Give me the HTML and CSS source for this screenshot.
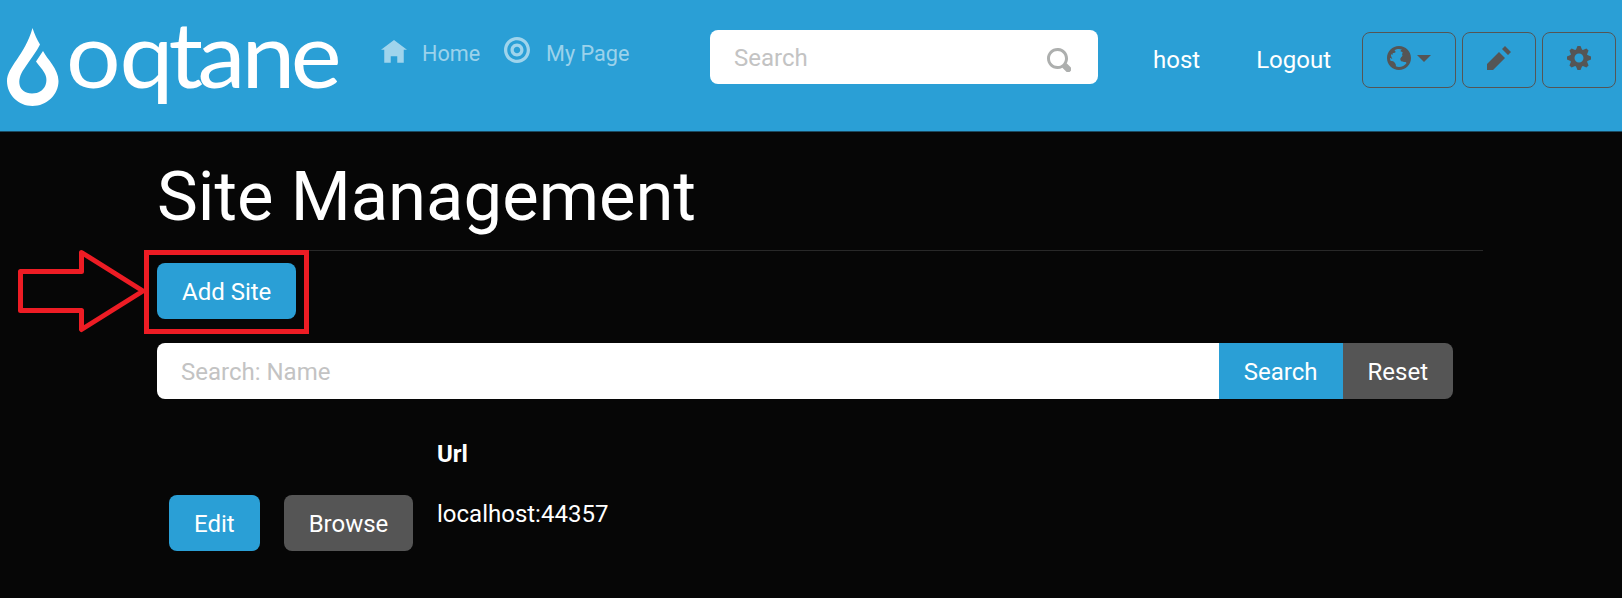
FILE: index.html
```html
<!DOCTYPE html>
<html lang="en">
<head>
<meta charset="utf-8">
<title>Site Management</title>
<link rel="stylesheet" href="styles.css">
</head>
<body>
<header class="topbar">
  <a class="brand" href="#">
    <svg class="logo" width="350" height="131" viewBox="0 0 350 131">
      <path class="ink" d="M32.500 28C34.500 34 37 39.500 40 44.500C37 51 29 61 24 69C16 80 18 93 32 93.500C46 93.500 49 80 44.500 73C42 68.500 38.500 65 36 61.500L43 51C47 59 58.500 69 58.500 81C58.500 95 46.500 106 32.500 106C18.500 106 7 95 7 81C7 67 25 55 32.500 28Z"/>
      <text class="wordmark" transform="scale(1.060 1)" y="88" x="62.2 112.700 159 186.300 227.800 274.200">oqtane</text>
    </svg>
  </a>
  <nav class="menu">
    <a class="menu-item" href="#"><svg class="icon home-icon" viewBox="0 0 8 8"><path d="M4 0l-4 3h1v4h2v-2h2v2h2v-4.030l1 .030-4-3z"/></svg>Home</a>
    <a class="menu-item" href="#"><svg class="icon target-icon" viewBox="0 0 8 8"><path d="M4 0c-2.200 0-4 1.800-4 4s1.800 4 4 4 4-1.800 4-4-1.800-4-4-4zm0 1c1.660 0 3 1.340 3 3s-1.340 3-3 3-3-1.340-3-3 1.340-3 3-3zm0 1c-1.110 0-2 .9-2 2s.9 2 2 2 2-.9 2-2-.89-2-2-2zm0 1c.56 0 1 .44 1 1s-.44 1-1 1-1-.44-1-1 .44-1 1-1z"/></svg>My Page</a>
  </nav>
  <div class="search"><span class="placeholder">Search</span><svg class="icon" viewBox="0 0 8 8"><path d="M3.500 0c-1.930 0-3.500 1.570-3.500 3.500s1.570 3.500 3.500 3.500c.59 0 1.170-.14 1.660-.41a1 1 0 0 0 .13.13l1 1a1.020 1.020 0 1 0 1.440-1.440l-1-1a1 1 0 0 0-.16-.13c.27-.49.44-1.060.44-1.660 0-1.930-1.550-3.500-3.500-3.500zm0 1c1.390 0 2.500 1.110 2.500 2.500 0 .66-.24 1.270-.66 1.720-.01.01-.02.02-.03.03a1 1 0 0 0-.13.13c-.44.4-1.040.63-1.690.63-1.390 0-2.500-1.110-2.500-2.500s1.110-2.500 2.500-2.500z"/></svg></div>
  <div class="account"><a href="#">host</a><a href="#">Logout</a></div>
  <div class="tools">
    <button class="tool globe"><svg class="icon" viewBox="0 0 8 8"><path d="M4 0c-2.200 0-4 1.800-4 4s1.800 4 4 4 4-1.800 4-4-1.800-4-4-4zm0 1c.33 0 .64.09.94.19-.21.2-.45.38-.41.56.04.18.69.13.69.5 0 .27-.42.35-.13.66.35.35-.64.98-.66 1.440-.03.83.84.97 1.530.97.42 0 .53.2.5.44-.54.77-1.460 1.250-2.470 1.250-.38 0-.73-.09-1.060-.22.22-.44-.28-1.310-.75-1.590-.23-.23-.72-.14-1-.25-.09-.27-.18-.54-.19-.84.03-.05.08-.09.16-.09.19 0 .45.38.59.34.18-.04-.74-1.310-.31-1.560.2-.12.6.39.47-.16-.12-.51.36-.28.66-.41.26-.11.45-.41.13-.59-.06-.03-.13-.1-.22-.19.45-.27.97-.44 1.530-.44z"/></svg><span class="caret"></span></button>
    <button class="tool"><svg class="icon" viewBox="0 0 8 8"><path d="M6 0l-1 1 2 2 1-1-2-2zm-2 2l-4 4v2h2l4-4-2-2z"/></svg></button>
    <button class="tool"><svg class="icon" viewBox="0 0 8 8"><path d="M3.500 0l-.5 1.190c-.1.030-.19.080-.28.130l-1.190-.5-.72.720.5 1.190c-.05.1-.09.180-.13.280l-1.190.5v1l1.190.5c.04.1.08.180.130.280l-.5 1.190.720.720 1.190-.5c.09.040.180.090.280.130l.5 1.190h1l.5-1.190c.090-.040.190-.080.280-.130l1.190.5.720-.720-.5-1.190c.040-.090.090-.190.130-.280l1.190-.5v-1l-1.190-.5c-.030-.090-.080-.190-.130-.280l.5-1.190-.720-.720-1.190.5c-.090-.040-.190-.090-.280-.130l-.5-1.190h-1zm.5 2.500c.83 0 1.500.67 1.500 1.500s-.67 1.500-1.500 1.500-1.500-.67-1.500-1.500.67-1.500 1.500-1.500z"/></svg></button>
  </div>
</header>
<main class="content">
  <h1 class="title">Site Management</h1>
  <div class="actions">
    <button class="btn primary">Add Site</button>
    <svg class="callout" width="300" height="90" viewBox="14 245 300 90"><rect x="146.500" y="252.500" width="160" height="79"/><path class="arrow" d="M20.500 271.500H81.500V252.500L143 291L81.500 329.500V310.500H20.500Z"/></svg>
  </div>
  <div class="filter">
    <div class="field">Search: Name</div>
    <button class="btn primary">Search</button>
    <button class="btn secondary">Reset</button>
  </div>
  <div class="grid">
    <span class="head">Url</span>
    <button class="btn primary edit">Edit</button>
    <button class="btn secondary browse">Browse</button>
    <span class="url">localhost:44357</span>
  </div>
</main>
</body>
</html>
```
FILE: styles.css
```css
* { box-sizing: border-box; }
body { margin: 0; height: 598px; overflow: hidden; background: #060606; color: #fff; font: 24px/36px Roboto, sans-serif; }
a { color: inherit; text-decoration: none; }
button { font: inherit; color: #fff; margin: 0; }
.icon { width: 24px; height: 24px; fill: currentColor; flex: none; display: block; }

.topbar { height: 132px; background: #2a9fd6; border-bottom: 1px solid #1b4a61; display: flex; align-items: flex-start; }
.brand { width: 381px; flex: none; }
.logo { display: block; overflow: visible; }
.ink { fill: #fff; }
.wordmark { fill: #fff; font: 91px Lato, sans-serif; }
.menu { width: 329px; flex: none; display: flex; gap: 24px; padding-top: 36px; color: rgba(255,255,255,.55); }
.menu-item { display: flex; font-size: 21.6px; line-height: 36px; }
.menu-item .icon { width: 26px; height: 26px; margin-right: 15px; }
.menu-item .target-icon { margin-top: 1px; margin-right: 16px; }
.home-icon { margin-top: 4px; }
.search { width: 388px; height: 54px; margin-top: 30px; padding: 0 27px 0 24px; border-radius: 8px; background: #fff; color: #c3c3c3; display: flex; justify-content: space-between; align-items: center; flex: none; }
.placeholder { padding-top: 2px; }
.search .icon { color: #adafae; margin-top: 6px; }
.account { width: 264px; padding: 42px 0 0 55px; display: flex; gap: 56px; flex: none; }
.tools { display: flex; gap: 6px; padding-top: 32px; }
.tool { width: 74px; height: 56px; padding: 13px 0 0 24px; border: 1px solid #555; border-radius: 8px; background: none; color: #555; display: flex; align-items: flex-start; }
.globe { width: 94px; }
.caret { border: 7px solid transparent; border-top-color: #555; border-bottom: 0; margin: 9px 0 0 6px; }

.content { width: 1326px; margin-left: 157px; padding-top: 22px; }
.title { margin: 0; height: 97px; border-bottom: 1px solid #282828; font-size: 68.8px; font-weight: 400; line-height: 86px; }
.actions { position: relative; padding-top: 12px; height: 92px; }
.callout { position: absolute; left: -143px; top: -6px; fill: none; stroke: #ed1c24; stroke-width: 5; }
.arrow { stroke-linejoin: round; }
.btn { height: 56px; padding: 1px 25px 0; border: 0; border-radius: 8px; line-height: 36px; }
.primary { background: #2a9fd6; }
.secondary { background: #555; }
.filter { width: 1296px; display: flex; border-radius: 8px; overflow: hidden; }
.filter .btn { border-radius: 0; }
.field { flex: 1; height: 56px; padding: 11px 24px; background: #fff; color: #c3c3c3; }
.grid { display: grid; grid-template-columns: 115px 153px auto; justify-items: start; padding: 37px 12px; row-gap: 23px; }
.head { grid-column: 3; font-weight: 700; line-height: 36px; }
.edit { grid-column: 1; }
.browse { width: 129px; padding: 1px 0 0; }
.url { line-height: 38px; }
```
